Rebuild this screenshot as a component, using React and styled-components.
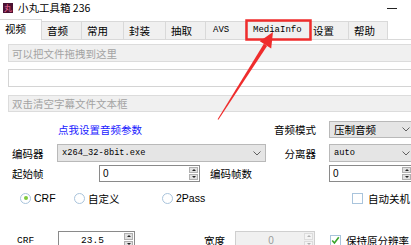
import React from "react";
import styled, { createGlobalStyle } from "styled-components";

const GlobalStyle = createGlobalStyle`
  body {
    margin: 0;
    background: #fff;
    font-family: "Noto Sans CJK SC", "Noto Sans", sans-serif;
  }
`;

const CJK = `"Noto Sans CJK SC", "Noto Sans", sans-serif`;
const MONO = `"Liberation Mono", "DejaVu Sans Mono", monospace`;

// 窗口
const Window = styled.div`
  position: relative;
  width: 411px;
  height: 245px;
  overflow: hidden;
  background: #fff;
  color: #000;
`;

// 标题栏
const TitleBar = styled.div`
  display: flex;
  align-items: center;
  height: 16px;
  padding-left: 3px;
  margin-bottom: 3px;
`;

const AppIcon = styled.span`
  display: flex;
  align-items: center;
  justify-content: center;
  width: 10px;
  height: 10px;
  background: #4b1232;
  color: #f06a9a;
  font-size: 8px;
  line-height: 1;
  font-family: ${CJK};
`;

const Title = styled.span`
  margin-left: 5px;
  font-size: 10.5px;
  line-height: 1;
  font-family: ${CJK};
`;

const Minimize = styled.span`
  margin-left: auto;
  margin-right: 14px;
  width: 10px;
  height: 1px;
  background: #222;
`;

// 选项卡
const TabBar = styled.div`
  display: flex;
  align-items: flex-end;
  height: 20px;
  border-bottom: 1px solid #d9d9d9;
`;

const Tab = styled.div`
  position: relative;
  box-sizing: border-box;
  width: ${(p) => p.$w}px;
  height: ${(p) => (p.$active ? 21 : 18)}px;
  margin-bottom: ${(p) => (p.$active ? -1 : 0)}px;
  padding-left: ${(p) => p.$pad ?? 5}px;
  padding-top: 2px;
  background: ${(p) => (p.$active ? "#fff" : "#f0f0f0")};
  border-top: 1px solid #d9d9d9;
  border-right: 1px solid #d9d9d9;
  z-index: ${(p) => (p.$active ? 1 : 0)};
  font-family: ${(p) => (p.$mono ? MONO : CJK)};
  font-size: ${(p) => (p.$mono ? 9 : 10.5)}px;
  line-height: 13px;
  white-space: nowrap;
`;

// 内容
const Panel = styled.div`
  padding-left: 8px;
`;

const TextBox = styled.div`
  box-sizing: border-box;
  width: 420px;
  height: ${(p) => p.$h}px;
  margin-top: ${(p) => p.$mt}px;
  padding-left: 3px;
  display: flex;
  align-items: center;
  background: ${(p) => (p.$disabled ? "#f0f0f0" : "#fff")};
  border: 1px solid ${(p) => (p.$disabled ? "#dcdcdc" : "#d4d4d4")};
  color: #a3a3a3;
  font-size: 10.5px;
  font-family: ${CJK};
`;

const Row = styled.div`
  display: flex;
  align-items: center;
  height: ${(p) => p.$h}px;
  margin-top: ${(p) => p.$mt}px;
  padding-left: ${(p) => p.$pl ?? 0}px;
`;

const Label = styled.span`
  flex: none;
  box-sizing: border-box;
  width: ${(p) => p.$w}px;
  margin-left: ${(p) => p.$ml ?? 0}px;
  padding-left: ${(p) => p.$pl ?? 0}px;
  padding-right: ${(p) => p.$pr ?? 0}px;
  text-align: ${(p) => p.$align ?? "left"};
  font-family: ${(p) => (p.$mono ? MONO : CJK)};
  font-size: ${(p) => (p.$mono ? 9.5 : 10.5)}px;
  white-space: nowrap;
`;

const LinkText = styled.span`
  flex: none;
  width: ${(p) => p.$w}px;
  margin-left: ${(p) => p.$ml}px;
  color: #1a1aff;
  font-size: 10.5px;
  font-family: ${CJK};
`;

const Combo = styled.div`
  flex: none;
  box-sizing: border-box;
  display: flex;
  align-items: center;
  width: ${(p) => p.$w}px;
  height: 100%;
  margin-left: ${(p) => p.$ml ?? 0}px;
  padding: 0 4px 0 4px;
  background: #e5e5e5;
  border: 1px solid #b9b9b9;
  font-size: ${(p) => (p.$mono ? 8.7 : 10.5)}px;
  font-family: ${(p) => (p.$mono ? MONO : CJK)};
  white-space: nowrap;
`;

const ComboText = styled.span`
  flex: 1;
  overflow: hidden;
`;

const Chevron = () => (
  <svg width="8" height="5" viewBox="0 0 8 5" style={{ flex: "none" }}>
    <path d="M0.5 0.5 L4 4 L7.5 0.5" fill="none" stroke="#606060" strokeWidth="1" />
  </svg>
);

const Spin = styled.div`
  flex: none;
  box-sizing: border-box;
  display: flex;
  width: ${(p) => p.$w}px;
  height: 100%;
  margin-left: ${(p) => p.$ml ?? 0}px;
  background: ${(p) => (p.$disabled ? "#f0f0f0" : "#fff")};
  border: 1px solid ${(p) => (p.$disabled ? "#cfcfcf" : "#8a8a8a")};
`;

const SpinValue = styled.span`
  flex: 1;
  display: flex;
  align-items: center;
  justify-content: ${(p) => (p.$center ? "center" : "flex-start")};
  padding-left: 3px;
  color: ${(p) => (p.$disabled ? "#9a9a9a" : "#000")};
  font-family: ${(p) => (p.$mono ? MONO : `"Liberation Sans", sans-serif`)};
  font-size: ${(p) => (p.$mono ? 9.5 : 10)}px;
`;

const SpinButtons = styled.div`
  flex: none;
  display: flex;
  flex-direction: column;
  width: 9px;
  margin: 1px;
  gap: 1px;
`;

const SpinHalf = styled.div`
  flex: 1;
  display: flex;
  align-items: center;
  justify-content: center;
  background: ${(p) => (p.$disabled ? "#f4f4f4" : "#e1e1e1")};
  border: 1px solid ${(p) => (p.$disabled ? "#dcdcdc" : "#b0b0b0")};

  &::after {
    content: "";
    border-left: 2px solid transparent;
    border-right: 2px solid transparent;
    ${(p) =>
      p.$up
        ? `border-bottom: 2px solid ${p.$disabled ? "#b0b0b0" : "#222"};`
        : `border-top: 2px solid ${p.$disabled ? "#b0b0b0" : "#222"};`}
  }
`;

const SpinBox = ({ w, ml, value, center, mono, disabled }) => (
  <Spin $w={w} $ml={ml} $disabled={disabled}>
    <SpinValue $center={center} $mono={mono} $disabled={disabled}>
      {value}
    </SpinValue>
    <SpinButtons>
      <SpinHalf $up $disabled={disabled} />
      <SpinHalf $disabled={disabled} />
    </SpinButtons>
  </Spin>
);

const Option = styled.label`
  flex: none;
  display: flex;
  align-items: center;
  width: ${(p) => p.$w ?? "auto"}px;
  margin-left: ${(p) => p.$ml ?? 0}px;
  font-size: 10.5px;
  font-family: ${(p) => (p.$latin ? `"Liberation Sans", sans-serif` : CJK)};
  white-space: nowrap;
`;

const RadioDot = styled.span`
  flex: none;
  box-sizing: border-box;
  display: flex;
  align-items: center;
  justify-content: center;
  width: 11px;
  height: 11px;
  margin-right: 3px;
  border-radius: 50%;
  border: 1px solid #a9c4dc;
  background: #fff;

  &::after {
    content: "";
    display: ${(p) => (p.$checked ? "block" : "none")};
    width: 4px;
    height: 4px;
    border-radius: 50%;
    background: #7fca3c;
  }
`;

const CheckBox = styled.span`
  flex: none;
  box-sizing: border-box;
  display: flex;
  align-items: center;
  justify-content: center;
  width: 11px;
  height: 11px;
  margin-right: 5px;
  border: 1px solid #a9c4dc;
  background: #fff;
`;

const Tick = () => (
  <svg width="11" height="11" viewBox="0 0 11 11">
    <path d="M1.5 5.5 L4.2 8.5 L9.5 1.5" fill="none" stroke="#3aa52a" strokeWidth="2" />
  </svg>
);

// 红框和箭头标注
const Annotation = styled.svg`
  position: absolute;
  left: 0;
  top: 0;
  pointer-events: none;
`;

const tabs = [
  { label: "视频", w: 42, active: true },
  { label: "音频", w: 40 },
  { label: "常用", w: 42 },
  { label: "封装", w: 42 },
  { label: "抽取", w: 40 },
  { label: "AVS", w: 40, mono: true, pad: 7 },
  { label: "MediaInfo", w: 64, mono: true, pad: 7 },
  { label: "设置", w: 39, pad: 3 },
  { label: "帮助", w: 39 },
];

export default function App() {
  return (
    <>
      <GlobalStyle />
      <Window>
        <TitleBar>
          <AppIcon>丸</AppIcon>
          <Title>小丸工具箱 236</Title>
          <Minimize />
        </TitleBar>

        <TabBar>
          {tabs.map((t) => (
            <Tab key={t.label} $w={t.w} $active={t.active} $mono={t.mono} $pad={t.pad}>
              {t.label}
            </Tab>
          ))}
        </TabBar>

        <Panel>
          <TextBox $disabled $h={18} $mt={4}>可以把文件拖拽到这里</TextBox>
          <TextBox $h={18} $mt={7} />
          <TextBox $disabled $h={17} $mt={8}>双击清空字幕文件文本框</TextBox>

          <Row $h={17} $mt={9}>
            <LinkText $ml={50} $w={208}>点我设置音频参数</LinkText>
            <Label $w={50} $align="right">音频模式</Label>
            <Combo $w={86} $ml={13}>
              <ComboText>压制音频</ComboText>
              <Chevron />
            </Combo>
          </Row>

          <Row $h={18} $mt={6}>
            <Label $w={49} $pl={4}>编码器</Label>
            <Combo $w={209} $mono>
              <ComboText>x264_32-8bit.exe</ComboText>
              <Chevron />
            </Combo>
            <Label $w={50} $align="right">分离器</Label>
            <Combo $w={86} $ml={13} $mono>
              <ComboText>auto</ComboText>
              <Chevron />
            </Combo>
          </Row>

          <Row $h={17} $mt={3}>
            <Label $w={91} $pl={4}>起始帧</Label>
            <SpinBox w={101} value="0" />
            <Label $w={129} $pl={10}>编码帧数</Label>
            <SpinBox w={84} value="0" />
          </Row>

          <Row $h={14} $mt={9} $pl={12}>
            <Option $w={54} $latin>
              <RadioDot $checked />
              CRF
            </Option>
            <Option $w={88}>
              <RadioDot />
              自定义
            </Option>
            <Option $w={190} $latin>
              <RadioDot />
              2Pass
            </Option>
            <Option>
              <CheckBox />
              自动关机
            </Option>
          </Row>

          <Row $h={18} $mt={26} $pl={9}>
            <Label $w={41} $mono>CRF</Label>
            <SpinBox w={77} value="23.5" center mono />
            <Label $w={31} $ml={69}>宽度</Label>
            <SpinBox w={80} value="0" center disabled />
            <Option $ml={15}>
              <CheckBox>
                <Tick />
              </CheckBox>
              保持原分辨率
            </Option>
          </Row>
        </Panel>

        <Annotation width="411" height="245" viewBox="0 0 411 245">
          <rect x="246.5" y="20.5" width="64" height="19" fill="none" stroke="#ef2c2c" strokeWidth="2.5" />
          <polygon points="217.6,119.3 218.4,119.8 267.1,45.9 263.9,43.8" fill="#ef2c2c" />
          <polygon points="273,32 259.8,41.3 271.2,48.5" fill="#ef2c2c" />
        </Annotation>
      </Window>
    </>
  );
}
